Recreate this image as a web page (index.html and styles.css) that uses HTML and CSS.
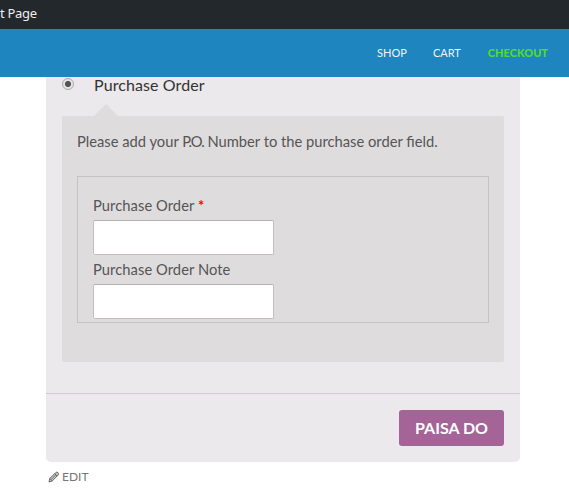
FILE: index.html
```html
<!DOCTYPE html>
<html lang="en">
<head>
<meta charset="utf-8">
<title>Checkout</title>
<link rel="stylesheet" href="styles.css">
</head>
<body>
<div class="admin-bar"><span>t Page</span></div>
<nav class="nav">
  <a class="shop">SHOP</a>
  <a class="cart">CART</a>
  <a class="current">CHECKOUT</a>
</nav>
<main class="payment">
  <label class="method"><span class="radio"></span><span class="method-name">Purchase Order</span></label>
  <div class="payment-box">
    <p class="intro">Please add your <span class="abbr">P.O.</span> Number to the purchase order field.</p>
    <div class="fields">
      <label class="field-label" for="po">Purchase Order <span class="required">*</span></label>
      <input id="po" type="text">
      <label class="field-label" for="note">Purchase Order Note</label>
      <input id="note" type="text">
    </div>
  </div>
  <div class="place-order"><button type="button">PAISA DO</button></div>
</main>
<footer class="edit">
  <svg width="12" height="12" viewBox="0 0 12 12" fill="none" stroke="#666" stroke-width="1">
    <path fill="#ccc" d="M1 11l.8-3.5L7.6 1.7q1.2-1.2 2.4 0t0 2.4L4.3 9.9z"/>
    <path d="M1.8 7.5l2.5 2.4M3.2 8.4l4.9-4.9M6.7 2.6l2.5 2.5"/>
  </svg>
  <span>EDIT</span>
</footer>
</body>
</html>
```

FILE: styles.css
```css
* { box-sizing: border-box; }
body {
  margin: 0;
  height: 500px;
  overflow: hidden;
  background: #fff;
  color: #555;
  font-family: Lato, sans-serif;
  font-size: 14.72px;
}
.admin-bar {
  height: 29px;
  background: #23282d;
  color: #eee;
  font: 13px/26px "Noto Sans", sans-serif;
  letter-spacing: -0.3px;
}
.nav {
  height: 48px;
  padding-right: 21px;
  display: flex;
  justify-content: flex-end;
  align-items: center;
  gap: 26px;
  background: #1e85be;
  color: #f3f3f3;
  font-size: 11px;
  line-height: 16px;
}
.current { margin-left: 1px; color: #51dc2d; font-weight: 900; }
.payment {
  width: 474px;
  height: 385px;
  margin-left: 46px;
  background: #ebe9eb;
  border-radius: 0 0 5px 5px;
}
.method {
  display: flex;
  height: 39px;
  padding-left: 16px;
  color: #333;
  font-size: 16px;
  line-height: 16px;
  letter-spacing: 0.1px;
}
.radio {
  width: 12px;
  height: 12px;
  margin: 1px 20px 0 0;
  border: 1px solid #aaa;
  border-radius: 50%;
  background: radial-gradient(circle, #555 0 2.7px, #e5e5e5 3.4px);
}
.payment-box {
  position: relative;
  width: 442px;
  height: 246px;
  margin-left: 16px;
  padding: 15px;
  background: #dfdcde;
  border-radius: 2px;
}
.payment-box::before {
  content: "";
  position: absolute;
  left: 32px;
  top: -12px;
  border: solid transparent;
  border-width: 0 12px 12px;
  border-bottom-color: #dfdcde;
}
.intro { margin: 0 0 25px; line-height: 20px; }
.abbr { letter-spacing: -1px; }
.fields {
  height: 147px;
  padding: 18px 15px 0;
  border: 1px solid #c5c2c4;
}
.field-label {
  display: block;
  height: 25px;
  line-height: 20px;
  letter-spacing: 0.06px;
}
.required { color: #f00; font-weight: 700; }
.fields input {
  display: block;
  width: 181px;
  height: 35px;
  margin: 0 0 4px;
  border: 1px solid #c3bec1;
  border-top-color: #b5b0b4;
  border-radius: 2px;
  background: #fff;
}
.place-order {
  display: flex;
  justify-content: flex-end;
  margin-top: 31px;
  padding: 16px 16px 0;
  border-top: 1px solid #cfcbd0;
}
button {
  width: 105px;
  height: 36px;
  padding: 0;
  border: 0;
  border-radius: 3px;
  background: #a46497;
  color: #fff;
  font: 700 16px/36px Lato, sans-serif;
}
.edit {
  display: flex;
  align-items: center;
  gap: 2px;
  margin: 7px 0 0 48px;
  color: #767676;
  font-size: 12px;
  line-height: 16px;
}
```
